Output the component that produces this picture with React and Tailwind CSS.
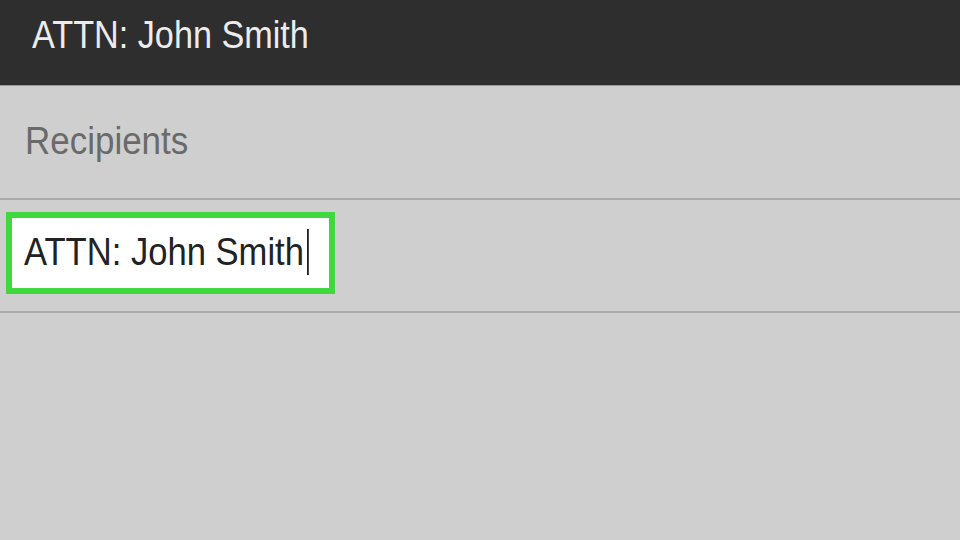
export default function App() {
  return (
    <div className="flex h-[540px] w-[960px] flex-col overflow-hidden bg-[#cfcfcf] font-['Liberation_Sans',Arial,sans-serif]">
      <header className="h-[86px] shrink-0 border-b border-[#9a9a9a] bg-[#2e2e2e] px-[32px] pt-[16px]">
        <h1 className="origin-left scale-x-[0.9] whitespace-nowrap text-[38px] leading-none text-[#ececec]">
          ATTN: John Smith
        </h1>
      </header>

      <div className="h-[114px] shrink-0 border-b-2 border-[#aaaaaa] px-[25px] pt-[36px]">
        <span className="inline-block origin-left scale-x-[0.92] text-[38px] leading-none text-[#6a6a6a]">
          Recipients
        </span>
      </div>

      <div className="h-[113px] shrink-0 border-b-2 border-[#aaaaaa] pl-[6px] pt-[12px]">
        <div className="h-[82px] w-[329px] border-[6px] border-[#3fd93f] bg-white pl-[12px] pt-[11px]">
          <span className="inline-flex origin-left scale-x-[0.91] items-center whitespace-nowrap text-[38px] leading-none text-[#222]">
            ATTN: John Smith
            <span className="ml-[3px] h-[46px] w-[2px] bg-[#222]" />
          </span>
        </div>
      </div>
    </div>
  );
}
